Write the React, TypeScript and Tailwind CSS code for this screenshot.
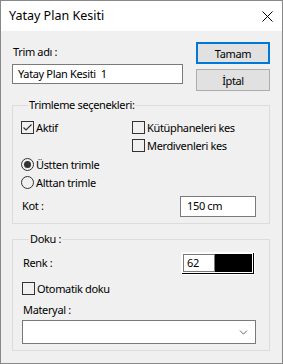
import { ChevronDown } from "lucide-react";

const font = { fontFamily: '"Noto Sans", "Open Sans", sans-serif' };

function CheckBox({ checked, label }: { checked?: boolean; label: string }) {
  return (
    <div className="flex h-[13px] items-center">
      <span className="flex h-[13px] w-[13px] items-center justify-center border border-[#333] bg-[#f0f0f0]">
        {checked && (
          <svg width="11" height="11" viewBox="0 0 11 11">
            <path d="M1.5 5.5 L4 8 L9.5 2.5" fill="none" stroke="#333" strokeWidth="1.2" />
          </svg>
        )}
      </span>
      <span className="ml-[2px] leading-[13px]">{label}</span>
    </div>
  );
}

function Radio({ checked, label }: { checked?: boolean; label: string }) {
  return (
    <div className="flex h-[13px] items-center">
      <span className="flex h-[13px] w-[13px] items-center justify-center rounded-full border border-[#333] bg-[#f0f0f0]">
        {checked && <span className="h-[7px] w-[7px] rounded-full bg-[#333]" />}
      </span>
      <span className="ml-[2px] leading-[13px]">{label}</span>
    </div>
  );
}

export default function App() {
  return (
    <div
      style={font}
      className="flex h-[364px] w-[283px] flex-col border border-[#888] bg-[#f0f0f0] text-[11px] tracking-[-0.35px] text-black"
    >
      {/* Title bar */}
      <div className="flex h-[30px] items-center justify-between bg-white pl-[8px] pr-[9px]">
        <span className="text-[12.5px] tracking-[0px]">Yatay Plan Kesiti</span>
        <svg width="11" height="11" viewBox="0 0 11 11">
          <path d="M0.5 0.5 L10.5 10.5 M10.5 0.5 L0.5 10.5" stroke="#000" strokeWidth="1" />
        </svg>
      </div>

      <div className="flex flex-col pl-[11px] pr-[12px]">
        {/* Trim adı + buttons */}
        <div className="mt-[11px] flex">
          <div className="flex w-[171px] flex-col pt-[2px]">
            <span className="h-[16px] pl-[1px] leading-[16px]">Trim adı :</span>
            <div className="mt-[4px] flex h-[20px] items-center border border-[#7a7a7a] bg-white pl-[5px]">
              Yatay Plan Kesiti&nbsp;&nbsp;1
            </div>
          </div>
          <div className="ml-auto flex w-[74px] flex-col gap-[5px]">
            <button className="h-[22px] border-2 border-[#0078d7] bg-[#e1e1e1] leading-none">Tamam</button>
            <button className="h-[22px] border border-[#adadad] bg-[#e1e1e1] leading-none">İptal</button>
          </div>
        </div>

        {/* Trimleme seçenekleri */}
        <fieldset className="mt-[6px] h-[127px] border border-[#dcdcdc] pl-[8px] pr-[13px]">
          <legend className="ml-[7px] h-[16px] px-[1px] leading-[16px]">Trimleme seçenekleri:</legend>
          <div className="mt-[8px] flex">
            <div className="w-[111px]">
              <CheckBox checked label="Aktif" />
            </div>
            <div className="flex flex-col gap-[5px]">
              <CheckBox label="Kütüphaneleri kes" />
              <CheckBox label="Merdivenleri kes" />
            </div>
          </div>
          <div className="mt-[6px] flex flex-col gap-[5px]">
            <Radio checked label="Üstten trimle" />
            <Radio label="Alttan trimle" />
          </div>
          <div className="mt-[7px] flex items-center justify-between">
            <span className="pl-[1px]">Kot :</span>
            <div className="flex h-[21px] w-[76px] items-center border border-[#7a7a7a] bg-white pl-[6px]">150 cm</div>
          </div>
        </fieldset>

        {/* Doku */}
        <fieldset className="mt-[7px] h-[120px] border border-[#dcdcdc] pl-[9px] pr-[13px]">
          <legend className="ml-[7px] h-[16px] px-[1px] leading-[16px]">Doku :</legend>
          <div className="mt-[5px] flex items-center justify-between">
            <span className="pl-[1px]">Renk :</span>
            <div className="mr-[1px] flex h-[23px] w-[74px] border border-white">
              <div className="flex flex-1 border-b border-r border-black bg-white p-[1px]">
                <div className="flex w-[32px] items-center border border-[#7a7a7a] bg-white pl-[3px]">62</div>
                <div className="flex-1 bg-black" />
              </div>
            </div>
          </div>
          <div className="mt-[7px]">
            <CheckBox label="Otomatik doku" />
          </div>
          <div className="mt-[7px] h-[16px] pl-[1px] leading-[16px]">Materyal :</div>
          <div className="mt-[2px] flex h-[24px] items-center justify-end border border-[#7a7a7a] bg-white pr-[5px]">
            <ChevronDown size={13} strokeWidth={1.5} className="text-[#444]" />
          </div>
        </fieldset>
      </div>
    </div>
  );
}
